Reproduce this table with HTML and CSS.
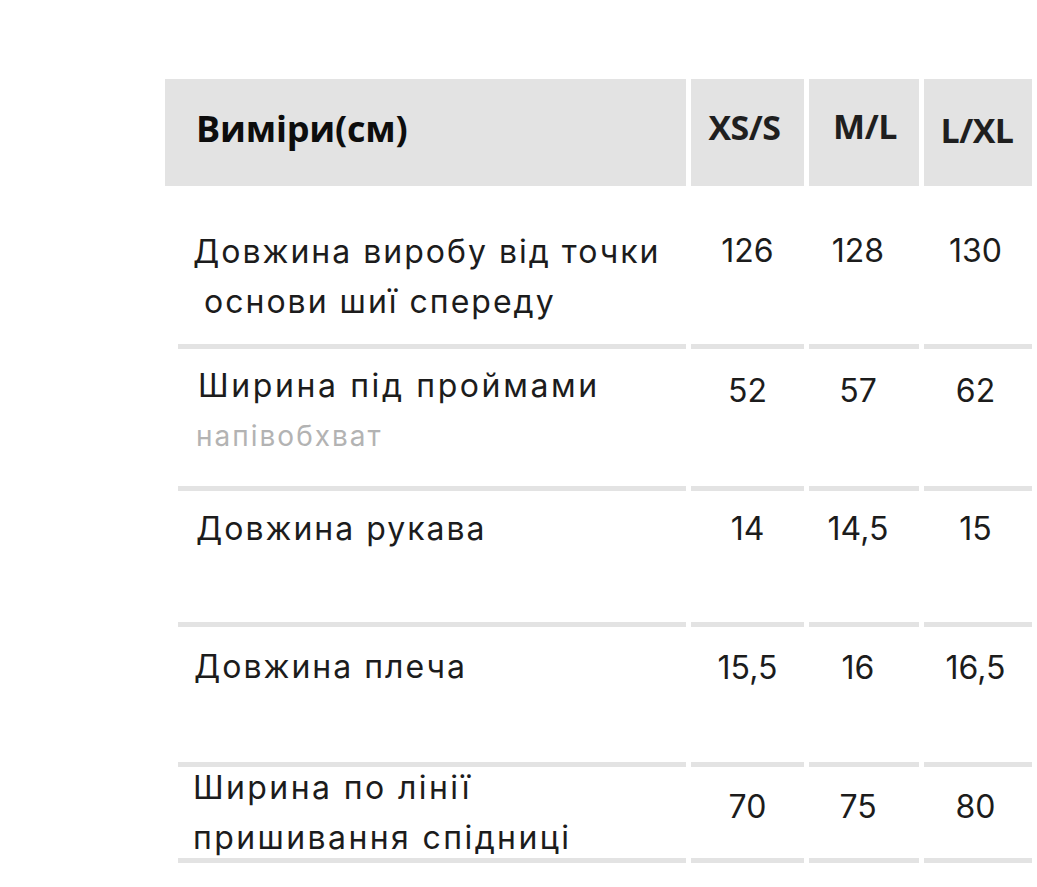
FILE: index.html
```html
<!DOCTYPE html>
<html lang="uk">
<head>
<meta charset="utf-8">
<title>Виміри</title>
<link rel="stylesheet" href="styles.css">
</head>
<body>
<div class="table">
  <div class="head head-label">Виміри(см)</div>
  <div class="head head-xs">XS/S</div>
  <div class="head head-ml">M/L</div>
  <div class="head head-xl">L/XL</div>

  <div class="cell label r1">Довжина виробу від точки<br>&nbsp;основи шиї спереду</div>
  <div class="cell num c2 r1n">126</div>
  <div class="cell num c3 r1n">128</div>
  <div class="cell num c4 r1n">130</div>

  <div class="cell label r2">Ширина під проймами<span class="sub">напівобхват</span></div>
  <div class="cell num c2 r2n">52</div>
  <div class="cell num c3 r2n">57</div>
  <div class="cell num c4 r2n">62</div>

  <div class="cell label r3">Довжина рукава</div>
  <div class="cell num c2 r3n">14</div>
  <div class="cell num c3 r3n">14,5</div>
  <div class="cell num c4 r3n">15</div>

  <div class="cell label r4">Довжина плеча</div>
  <div class="cell num c2 r4n">15,5</div>
  <div class="cell num c3 r4n">16</div>
  <div class="cell num c4 r4n">16,5</div>

  <div class="cell label r5">Ширина по лінії<br>пришивання спідниці</div>
  <div class="cell num c2 r5n">70</div>
  <div class="cell num c3 r5n">75</div>
  <div class="cell num c4 r5n">80</div>
</div>
</body>
</html>
```
FILE: styles.css
```css
html, body {
  margin: 0;
  padding: 0;
  background: #ffffff;
}

body {
  width: 1037px;
  height: 887px;
  overflow: hidden;
}

.table {
  margin: 79px 0 0 165px;
  display: grid;
  grid-template-columns: 521px 113px 110px 108px;
  grid-template-rows: 107px 163px 142px 136px 140px 96px;
  column-gap: 5px;
  color: #1c1c1c;
}

.head {
  background: #e3e3e3;
  font-family: "Open Sans", "Liberation Sans", sans-serif;
  font-weight: 700;
  font-size: 34px;
  line-height: 44px;
  letter-spacing: -0.5px;
  color: #1f1f1f;
  text-align: center;
  box-sizing: border-box;
}

.head-label {
  text-align: left;
  padding-left: 31px;
  padding-top: 28px;
  font-size: 36px;
  letter-spacing: -0.2px;
  color: #0d0d0d;
}

.head-xs { padding-top: 26px; padding-right: 6px; }
.head-ml { padding-top: 25px; padding-left: 2px; }
.head-xl { padding-top: 29px; padding-right: 2px; }

.cell {
  border-bottom: 5px solid #e3e3e3;
  font-family: Inter, "Noto Sans", sans-serif;
  font-size: 32px;
  line-height: 50px;
  font-weight: 400;
  box-sizing: border-box;
}

.label {
  margin-left: 13px;
  padding-left: 15px;
  letter-spacing: 2px;
  display: flex;
  flex-direction: column;
  align-items: flex-start;
}

.num {
  text-align: center;
}

.c2 { padding-right: 0; }
.c3 { padding-right: 12px; }
.c4 { padding-right: 5px; }

.sub {
  font-size: 28px;
  line-height: 50px;
  letter-spacing: 2px;
  color: #b3b3b3;
}

.r1 { padding-top: 41px; }
.r1n { padding-top: 40px; }
.r2 { padding-top: 12px; padding-left: 20px; letter-spacing: 2.6px; }
.r2 .sub { margin-left: -2px; letter-spacing: 2px; }
.r2n { padding-top: 17px; }
.r3 { padding-top: 13px; padding-left: 18px; }
.r3n { padding-top: 13px; }
.r4 { padding-top: 15px; padding-left: 16px; }
.r4n { padding-top: 16px; }
.r5 { padding-top: 0; margin-top: -4px; letter-spacing: 2.4px; }
.r5n { padding-top: 15px; }
```
